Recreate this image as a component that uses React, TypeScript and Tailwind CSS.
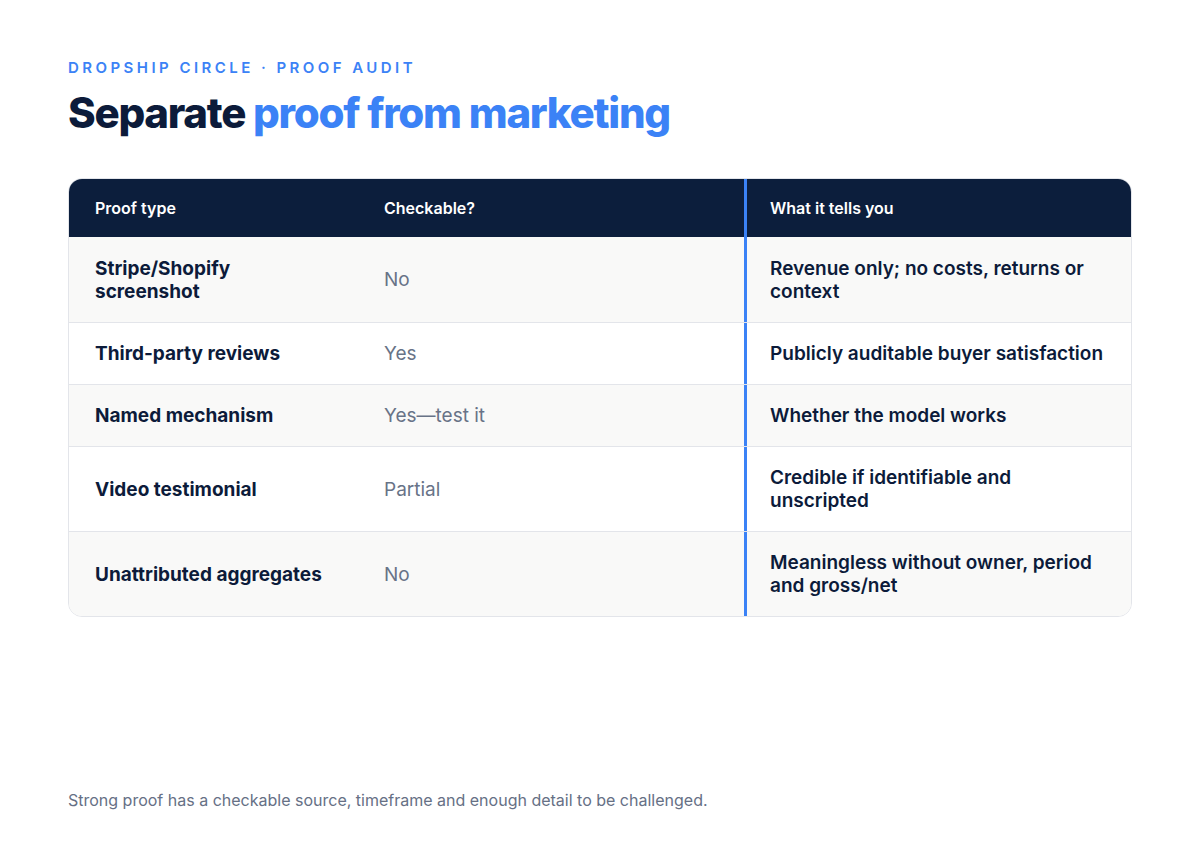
const rows = [
  { type: "Stripe/Shopify screenshot", check: "No", tells: "Revenue only; no costs, returns or context", tall: true },
  { type: "Third-party reviews", check: "Yes", tells: "Publicly auditable buyer satisfaction", tall: false },
  { type: "Named mechanism", check: "Yes—test it", tells: "Whether the model works", tall: false },
  { type: "Video testimonial", check: "Partial", tells: "Credible if identifiable and unscripted", tall: true },
  { type: "Unattributed aggregates", check: "No", tells: "Meaningless without owner, period and gross/net", tall: true },
];

export default function App() {
  return (
    <div
      className="w-[1200px] h-[842px] bg-white flex flex-col px-[68px] pt-[59px] pb-[32px]"
      style={{ fontFamily: "Inter, 'Noto Sans', sans-serif" }}
    >
      <div className="text-[15px] font-semibold tracking-[0.23em] text-[#3b82f6] leading-[18px]">
        DROPSHIP CIRCLE · PROOF AUDIT
      </div>
      <h1 className="mt-[11px] text-[42px] font-extrabold tracking-[-0.03em] leading-[50px] text-[#0c1b3a]">
        Separate <span className="text-[#3b82f6]">proof from marketing</span>
      </h1>

      {/* table */}
      <div className="mt-[40px] w-[1064px] rounded-[14px] border border-[#e3e5ea] overflow-hidden">
        <div className="grid grid-cols-[289px_387px_1fr] h-[59px] bg-[#0c1e3c] text-white text-[16px] font-semibold -mt-px -mx-px">
          <div className="flex items-center pl-[27px]">Proof type</div>
          <div className="flex items-center pl-[27px]">Checkable?</div>
          <div className="flex items-center pl-[23px] border-l-[3px] border-[#3b82f6]">What it tells you</div>
        </div>
        {rows.map((r, i) => (
          <div
            key={r.type}
            className={`grid grid-cols-[288px_387px_1fr] text-[19px] leading-[23px] ${
              i > 0 ? "border-t border-[#e3e5ea]" : ""
            } ${i % 2 === 0 ? "bg-[#f9f9f8]" : "bg-white"} ${r.tall ? "h-[85px]" : "h-[62px]"}`}
          >
            <div className="flex items-center pl-[26px] pr-[28px] font-bold text-[#0c1b3a]">{r.type}</div>
            <div className="flex items-center pl-[27px] text-[#687387]">{r.check}</div>
            <div className="flex items-center pl-[23px] pr-5 border-l-[3px] border-[#3b82f6] font-semibold text-[#0c1b3a]">
              {r.tells}
            </div>
          </div>
        ))}
      </div>

      <div className="mt-auto text-[16px] text-[#667085] leading-[20px]">
        Strong proof has a checkable source, timeframe and enough detail to be challenged.
      </div>
    </div>
  );
}
